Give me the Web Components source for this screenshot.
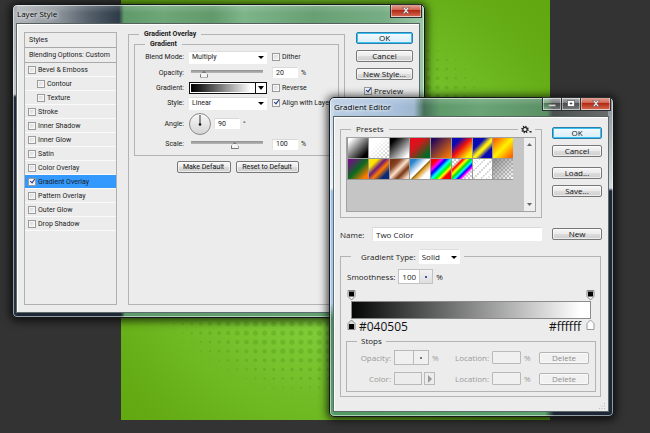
<!DOCTYPE html>
<html lang="en">
<head>
<meta charset="utf-8">
<title>Layer Style</title>
<style>
html, body { margin: 0; height: 100%; background: #333; }
body { font-family: Roboto, "Liberation Sans", sans-serif; color: #1b1b1b; overflow: hidden; }
</style>
</head>
<body>
<work-space></work-space>
<script>
const controls = `
*, *::before { box-sizing: border-box; }
label, span { white-space: nowrap; }
input, select, button { font: inherit; color: inherit; margin: 0; min-width: 0; border-radius: 0; }
input[type=text] { width: 100%; height: var(--h, 11px); padding: 0 3px; border: 1px solid #fff; border-top-color: #d8d8d8; border-left-color: #e2e2e2; background: #fff; outline: none; display: block; }
.pick { position: relative; display: block; }
.pick select { appearance: none; display: block; width: 100%; height: var(--sh, 13px); padding: 0 2px; border: 1px solid #fff; border-top-color: #ddd; background: #fff; }
.pick::after { content: ""; position: absolute; right: 3px; top: 50%; margin-top: -1px; border: 3px solid transparent; border-top-color: #000; border-bottom: 0; pointer-events: none; }
`;
function define(name, html) {
  const t = document.createElement('template');
  t.innerHTML = html;
  customElements.define(name, class extends HTMLElement {
    constructor() {
      super();
      this.attachShadow({ mode: 'open' }).append(t.content.cloneNode(true));
    }
  });
}

/* glass window: title bar, window buttons, slotted client area */
define('glass-window', `<style>
*{box-sizing:border-box}
:host{display:block;box-sizing:border-box;border:1px solid #15191c;border-radius:5px;background:var(--glass);
 box-shadow:inset 0 0 0 1px #ffffff88,0 1px 8px 2px #000b}
header{display:flex;align-items:flex-start;justify-content:space-between;height:18px;padding:0 3px}
h1{margin:0;padding-left:1px;font:400 8px/18px "Open Sans",sans-serif;color:#000;text-shadow:0 0 4px #fff,0 0 5px #fffc,0 0 6px #fffa}
main{margin:0 4px 4px 3px;background:#ececec;border:1px solid #5e6a6c;border-top-color:#56605f;box-shadow:inset 1px 1px #fff}
</style><header><h1><slot name="title"></slot></h1><slot name="buttons"></slot></header><main><slot></slot></main>`);

define('window-button', `<style>
:host{display:block}
button{display:flex;align-items:center;justify-content:center;box-sizing:border-box;width:var(--w,18px);height:12px;padding:0;border:1px solid #ffffff70;border-top:0;
 background:var(--face,linear-gradient(#ffffff66,#ffffff30 50%,#00000030 50%,#ffffff30));box-shadow:0 0 0 1px #2a3034}
:host([kind=close]){--face:linear-gradient(#e0a396,#cf5f4b 48%,#b32a15 50%,#d2644c)}
svg{display:none}
:host([kind=close]) .c,:host([kind=max]) .m,:host([kind=min]) .n{display:block}
</style><button type="button" aria-label="Window control">
<svg class="c" width="8" height="7" viewBox="0 0 8 7"><path d="M.6.6h2L4 2.200 5.400.6h2L5 3.500l2.400 2.900h-2L4 4.800 2.600 6.400h-2L3 3.500z" fill="#fff" stroke="#3c3f4c" stroke-width=".5"/></svg>
<svg class="m" width="8" height="7" viewBox="0 0 8 7"><path d="M.5.5h7v6h-7zM3 3h2v1H3z" fill="#fff" fill-rule="evenodd" stroke="#444" stroke-width=".6"/></svg>
<svg class="n" width="8" height="7" viewBox="0 0 8 7"><path d="M.5 4.500h7v1.800h-7z" fill="#ddd" stroke="#777" stroke-width=".5"/></svg>
</button>`);

define('push-button', `<style>
:host{display:block}
button{font:inherit;color:#111;display:block;box-sizing:border-box;width:100%;height:12px;line-height:10px;padding:0 5px;white-space:nowrap;border:1px solid #777;border-radius:2px;
 background:linear-gradient(#f7f7f7,#ebebeb 48%,#dcdcdc 52%,#cfcfcf);box-shadow:inset 0 0 0 1px #fff9}
:host([primary]) button{border-color:#2c7fa8;background:linear-gradient(#f3fafd,#d9eef8);box-shadow:inset 0 0 0 1px #3cc0f0}
:host([off]) button{color:#8d8d8d;border-color:#b4b4b4;background:#f1f1f1}
</style><button type="button"><slot></slot></button>`);

customElements.define('check-item', class extends HTMLElement {
  constructor() {
    super();
    this.attachShadow({ mode: 'open' }).innerHTML = `<style>
:host{display:block}
label{display:flex;align-items:center;gap:2px;white-space:nowrap}
input{appearance:none;flex:none;box-sizing:border-box;width:8px;height:8px;margin:0;border:1px solid #9a9a9a;background:linear-gradient(135deg,#cfd2d4,#fafafa);position:relative;outline:1px solid #f6f6f6;outline-offset:-2px}
input:checked{background:#f2f5fa}
input:checked::after{content:"";position:absolute;left:2px;top:-1px;width:2px;height:4px;border:solid #1f3c8c;border-width:0 1px 1px 0;transform:rotate(38deg)}
</style><label><input type="checkbox"><slot></slot></label>`;
  }
  connectedCallback() { this.shadowRoot.querySelector('input').checked = this.hasAttribute('checked'); }
});

define('group-box', `<style>
:host{display:block}
fieldset{box-sizing:border-box;min-width:0;margin:0;padding:0;border:1px solid #b3b3b3;height:100%}
legend{margin-left:var(--inset,10px);padding:0 var(--lp,5px);line-height:10px;font-weight:var(--lw,400)}
</style><fieldset><legend><slot name="legend"></slot></legend><slot></slot></fieldset>`);

define('effect-list', `<style>
:host{display:block;box-sizing:border-box;min-height:273px;border:1px solid #b0b0b0}
ul{list-style:none;margin:0;padding:0}
li{box-sizing:border-box;height:14px;padding-left:3px;border-bottom:1px solid #fafafa;display:flex;align-items:center}
li.head{height:15px;border-bottom:1px solid #a9a9a9;padding-left:4px}
li.sub{padding-left:12px}
li.on{background:#3399ff}
</style><ul>
<li class="head">Styles</li><li class="head">Blending Options: Custom</li>
<li><check-item>Bevel &amp; Emboss</check-item></li>
<li class="sub"><check-item>Contour</check-item></li>
<li class="sub"><check-item>Texture</check-item></li>
<li><check-item>Stroke</check-item></li>
<li><check-item>Inner Shadow</check-item></li>
<li><check-item>Inner Glow</check-item></li>
<li><check-item>Satin</check-item></li>
<li><check-item>Color Overlay</check-item></li>
<li class="on"><check-item checked>Gradient Overlay</check-item></li>
<li><check-item>Pattern Overlay</check-item></li>
<li><check-item>Outer Glow</check-item></li>
<li><check-item>Drop Shadow</check-item></li>
</ul>`);

define('overlay-settings', `<style>${controls}
:host{display:block}
.grid{display:grid;grid-template-columns:49px 78px 1fr;grid-template-rows:16px 15px 15px 16px 25px 16px;column-gap:5px;align-items:center;padding-bottom:3px}
.grid>label{text-align:right}
.val{display:grid;grid-template-columns:26px auto;gap:3px;justify-content:start;align-items:center}
input[type=range]{appearance:none;width:72px;height:10px;margin:0 0 0 2px;background:linear-gradient(#8f8f8f,#b9b9b9) 0 2px/100% 3px no-repeat;display:block}
input[type=range]::-webkit-slider-thumb{appearance:none;width:8px;height:7px;margin-top:3px;clip-path:polygon(50% 0,100% 60%,100% 100%,0 100%,0 60%);
 background:linear-gradient(#f4f4f4,#f4f4f4) 50% 70%/6px 4px no-repeat #777}
.ramp{display:flex;height:12px;padding:0;border:1px solid #111;background:#fff;width:100%}
.ramp i{flex:1;margin:1px;background:linear-gradient(90deg,#000,#222 15%,#fff 95%)}
.ramp b{width:11px;border-left:1px solid #111;display:flex;align-items:center;justify-content:center}
.ramp b::after{content:"";border:3px solid transparent;border-top:4px solid #000;border-bottom:0}
.ang{display:grid;grid-template-columns:22px 26px auto;gap:3px;align-items:center;justify-content:start}
svg{display:block}
.btns{display:flex;justify-content:center;gap:5px;padding:5px 0 0 2px}
.btns>:first-child{width:54px}.btns>:last-child{width:63px}
.inner{margin:0 5px}
</style>
<group-box class="inner"><span slot="legend">Gradient</span>
<div class="grid">
<label for="mode">Blend Mode:</label><span class="pick"><select id="mode"><option>Multiply</option></select></span><check-item>Dither</check-item>
<label for="opr">Opacity:</label><input type="range" id="opr" value="14"><div class="val"><input type="text" value="20" aria-label="Opacity"><span>%</span></div>
<label for="ramp">Gradient:</label><button class="ramp" id="ramp" type="button" aria-label="Gradient"><i></i><b></b></button><check-item>Reverse</check-item>
<label for="sty">Style:</label><span class="pick"><select id="sty"><option>Linear</option></select></span><check-item checked>Align with Layer</check-item>
<label for="ang">Angle:</label><div class="ang"><svg width="22" height="22" viewBox="0 0 22 22"><defs><linearGradient id="d" x2="0" y2="1"><stop stop-color="#f8f8f8"/><stop offset="1" stop-color="#d4d4d4"/></linearGradient></defs><circle cx="11" cy="11" r="10.500" fill="url(#d)" stroke="#8a8a8a"/><path d="M11 2v9" stroke="#333"/><circle cx="11" cy="11.500" r="1.300" fill="#111"/></svg><input type="text" id="ang" value="90"><span>°</span></div><span></span>
<label for="scr">Scale:</label><input type="range" id="scr" value="62"><div class="val"><input type="text" value="100" aria-label="Scale"><span>%</span></div>
</div></group-box>
<div class="btns"><push-button>Make Default</push-button><push-button>Reset to Default</push-button></div>`);

define('layer-style', `<style>
:host{display:grid;grid-template-columns:93px 1fr 57px;column-gap:11px;padding:5px 6px 7px 7px;font-size:7px}
effect-list{margin-top:3px}
.panel{--lw:700}
.side{display:flex;flex-direction:column;gap:6px;padding-top:3px;font:8px "Open Sans",sans-serif}
.side check-item{margin:-1px 0 0 8px}
</style><effect-list></effect-list>
<group-box class="panel"><span slot="legend">Gradient Overlay</span><overlay-settings></overlay-settings></group-box>
<div class="side"><push-button primary>OK</push-button><push-button>Cancel</push-button><push-button>New Style...</push-button><check-item checked>Preview</check-item></div>`);

/* gradient presets */
const checker = (c) => `repeating-conic-gradient(${c} 0 25%,#fff 0 50%) 0 0/4px 4px`;
const presets = [
  '#fff 10%,#000 85%', null, '#000 15%,#fff 90%', '#e30e1c 20%,#cc1a1c 38%,#006b22 85%', '#24085c 10%,#ff7a00 95%',
  '#0a0ab4 22%,#f01010 48%,#fff200 85%', '#0a0ab4 30%,#ffee10 50%,#ffee10 56%,#0a0ab4 74%', '#ff6a00 10%,#fff200 50%,#ff6a00 90%',
  '#6f1180 10%,#0a6a20 50%,#ff7c00 88%', '#ffe600 22%,#6d1a7c 42%,#ff7a00 58%,#0b2a78 80%', '#7a3514 15%,#8c4a2a 28%,#ffe2cc 48%,#7a3514 68%,#f6d9c4 90%',
  '#2a84cc 15%,#fff 46%,#fff 50%,#8f6512 54%,#e0a030 60%,#fff 78%', '#f00 16%,#f0f 28%,#00f 38%,#0ff 50%,#0f0 62%,#ff0 70%,#f00 80%',
  null, null, null].map(s => s && `linear-gradient(135deg,${s})`);
presets[1] = `linear-gradient(135deg,#fff 30%,#fff0),${checker('#ccc')}`;
presets[13] = `linear-gradient(135deg,#fff0 20%,#f00 28%,#ff0 38%,#0d0 48%,#0ff 56%,#00f 64%,#f0f 70%,#fff0 78%),${checker('#ccc')}`;
presets[14] = `repeating-linear-gradient(135deg,#fff 0 3px,#fff6 3px 5px),${checker('#bbb')}`;
presets[15] = `linear-gradient(135deg,#777c,#7770),${checker('#c4c4c4')}`;

customElements.define('preset-grid', class extends HTMLElement {
  constructor() {
    super();
    this.attachShadow({ mode: 'open' }).innerHTML = `<style>
:host{display:flex;box-sizing:border-box;height:75px;border:1px solid #a2a2a2;background:#c5c5c5;justify-content:space-between}
.g{display:grid;grid-template-columns:repeat(8,1fr);grid-auto-rows:20px;gap:1px;width:165px;align-self:flex-start;background:#999;padding:0 0 1px 1px}
.g button{border:0;padding:0;min-width:0;border-radius:0}
.bar{width:11px;background:#efefef;display:flex;flex-direction:column;justify-content:space-between;align-items:center;padding:5px 0;box-sizing:border-box}
.bar svg{display:block}
</style><div class="g">${presets.map((b, i) => `<button type="button" aria-label="Preset ${i + 1}" style="background:${b}"></button>`).join('')}</div>
<div class="bar"><svg width="5" height="3"><path d="M0 3 2.500 0 5 3z" fill="#666"/></svg><svg width="5" height="3"><path d="M0 0 2.500 3 5 0z" fill="#666"/></svg></div>`;
  }
});

define('gradient-ramp', `<style>
:host{display:block}
.row{display:flex;justify-content:space-between;align-items:center}
.bar{height:18px;margin:0 4px;box-sizing:border-box;border:1px solid #8b8b8b;background:linear-gradient(90deg,#040505,#fff 96%)}
svg{display:block}
.row.low{height:14px;align-items:flex-start}
.codes{flex:1;display:flex;justify-content:space-between;padding:0 5px 0 3px;font:12px/16px "Open Sans",sans-serif;color:#111}
</style>
<div class="row"><svg width="9" height="11" viewBox="0 0 9 11"><path d="M1 .5h7v6L4.500 10 1 6.500z" fill="#eee" stroke="#888"/><path d="M2 1.500h5v5H2z" fill="#000"/></svg><svg width="9" height="11" viewBox="0 0 9 11"><path d="M1 .5h7v6L4.500 10 1 6.500z" fill="#eee" stroke="#888"/><path d="M2 1.500h5v5H2z" fill="#000"/></svg></div>
<div class="bar"></div>
<div class="row low"><svg width="9" height="12" viewBox="0 0 9 12"><path d="M1 10.500h7v-6L4.500 1 1 4.500z" fill="#ddd" stroke="#888"/><path d="M2 5h5v5H2z" fill="#000"/></svg>
<div class="codes"><span>#040505</span><span>#ffffff</span></div>
<svg width="9" height="12" viewBox="0 0 9 12"><path d="M1 10.500h7v-6L4.500 1 1 4.500z" fill="#fff" stroke="#999"/></svg></div>`);

define('stop-rows', `<style>${controls}
:host{display:grid;grid-template-columns:44px 35px 15px 39px 29px 1fr 50px;column-gap:3px;row-gap:7px;align-items:center;padding:4px 6px 6px 0;color:#9a9a9a}
label{text-align:right}
.f{display:flex;height:15px;border:1px solid #b9b9b9;background:#f0f0f0}
.f input{flex:1;width:0;border:0;height:100%;background:none}
.f button{width:15px;border:0;border-left:1px solid #b9b9b9;background:none;padding:0;display:flex;align-items:center;justify-content:center}
.f button i{width:2px;height:2px;background:#777}
.c{display:flex;gap:2px;width:41px}
.c button{height:13px;border:1px solid #b9b9b9;background:#ececec;padding:0;display:flex;align-items:center;justify-content:center}
.c .s{flex:1}.c .a{width:11px}
.c .a::after{content:"";border:4px solid transparent;border-left:4px solid #999;border-right:0}
input.loc{height:13px;border:1px solid #b9b9b9;background:#f0f0f0;border-radius:1px}
</style>
<label for="o">Opacity:</label><div class="f"><input type="text" id="o" disabled><button type="button" aria-label="Opacity slider"><i></i></button></div><span>%</span>
<label for="l1">Location:</label><input class="loc" type="text" id="l1" disabled><span>%</span><push-button off>Delete</push-button>
<label for="c">Color:</label><div class="c"><button class="s" id="c" type="button" aria-label="Color"></button><button class="a" type="button" aria-label="Color menu"></button></div><span></span>
<label for="l2">Location:</label><input class="loc" type="text" id="l2" disabled><span>%</span><push-button off>Delete</push-button>`);

define('gradient-editor', `<style>${controls}
:host{display:block;font:8px "Open Sans",sans-serif;padding:7px 6px 14px 6px;position:relative}
.top{display:grid;grid-template-columns:1fr 50px;column-gap:10px}
.presets{position:relative;height:94px}
.presets preset-grid{margin:3px 5px 0}
.presets group-box{height:100%}
.gear{position:absolute;right:7px;top:0;width:17px;height:10px;border:0;padding:0;background:#ececec;display:flex;align-items:center;justify-content:center}
.side{display:flex;flex-direction:column;gap:6px;padding-top:3px}
.side :nth-child(3){margin-top:4px}
.name{display:flex;align-items:center;gap:9px;--h:14px}
.name label{width:23px}
.mid{margin-top:9px;align-items:center}
.type{margin:8px 1px 0 0;--lp:4px}
.tl{display:flex;align-items:center;gap:3px;padding-left:6px;--sh:15px}
.tl .pick{width:41px}
.smooth{display:flex;align-items:center;gap:3px;padding:5px 0 0 6px}
.spin{display:flex;width:35px;height:15px;border:1px solid #c2c2c2;background:#fff}
.spin input{width:20px;height:13px;border:0;padding:0 0 0 3px}
.spin button{flex:1;border:0;border-left:1px solid #ccc;background:linear-gradient(#f2f2f2,#dedede);padding:0;display:flex;align-items:center;justify-content:center}
.spin i{width:2px;height:2px;background:#3558a8}
gradient-ramp{margin:6px 5px 0 6px}
.stops{margin:3px 4px 4px 5px}
.grip{position:absolute;right:2px;bottom:1px}
</style>
<div class="top"><div class="presets"><group-box><span slot="legend">Presets</span><preset-grid></preset-grid></group-box>
<button class="gear" type="button" aria-label="Preset menu"><svg width="12" height="9" viewBox="0 0 12 9"><circle cx="4" cy="4.500" r="3" fill="none" stroke="#222" stroke-width="1.600" stroke-dasharray="1.200 1.150"/><circle cx="4" cy="4.500" r="2.200" fill="none" stroke="#222" stroke-width="1.200"/><path d="M8.500 6h2v1.500h-2z" fill="#222"/></svg></button></div>
<div class="side"><push-button primary>OK</push-button><push-button>Cancel</push-button><push-button>Load...</push-button><push-button>Save...</push-button></div></div>
<div class="top mid"><div class="name"><label for="n">Name:</label><input type="text" id="n" value="Two Color"></div><push-button>New</push-button></div>
<group-box class="type"><div slot="legend" class="tl"><label for="t">Gradient Type:</label><span class="pick"><select id="t"><option>Solid</option></select></span></div>
<div class="smooth"><label for="s">Smoothness:</label><div class="spin"><input type="text" id="s" value="100"><button type="button" aria-label="Smoothness slider"><i></i></button></div><span>%</span></div>
<gradient-ramp></gradient-ramp>
<group-box class="stops"><span slot="legend">Stops</span><stop-rows></stop-rows></group-box></group-box>
<svg class="grip" width="7" height="7" viewBox="0 0 7 7" fill="#bbb"><path d="M5 0h1v1H5zM5 2.500h1v1H5zM5 5h1v1H5zM2.500 2.500h1v1h-1zM2.500 5h1v1h-1zM0 5h1v1H0z"/></svg>`);

/* artboard with a ring of halftone dots */
customElements.define('art-board', class extends HTMLElement {
  constructor() {
    super();
    let dots = '';
    for (let i = -18; i < 24; i++) for (let j = -36; j < 9; j++) {
      const x = 152.700 + i * 9.100, y = 333 + j * 9.100;
      const d = Math.hypot(x - 199, y - 200), r = Math.min(2.600, (208 - d) / 20);
      if (r > .4) dots += `<circle cx="${x.toFixed(1)}" cy="${y.toFixed(1)}" r="${r.toFixed(1)}"/>`;
    }
    this.attachShadow({ mode: 'open' }).innerHTML = `<style>
:host{display:block;background:radial-gradient(circle at 50% 52%,#8bd848 0,#84d13e 30%,#72bd27 58%,#63aa13 88%,#61a710)}
svg{display:block;width:100%;height:100%;fill:#3f8a0c;fill-opacity:.26}
</style><svg aria-hidden="true">${dots}</svg>`;
  }
});

define('work-space', `<style>
:host{display:block;position:relative;height:100vh;overflow:hidden;background:#333}
art-board{position:absolute;inset:0 100px 13px 121px}
.a{position:absolute;left:12px;right:225px;top:4px;
 --glass:linear-gradient(#a7acb2,#c5c9ce 89px,#1f2b39 92px,#27323f) 0 0/4px 100% no-repeat,
 linear-gradient(90deg,#1c2836 108px,#5d9a6b 112px,#63a472) 0 100%/100% 5px no-repeat,
 linear-gradient(#ffffff30,#fff0 8px,#fff0) 0 0/100% 18px no-repeat,
 linear-gradient(90deg,#b5b9bd,#8d949b 45px,#56616c 75px,#2f3b48 106px,#5f9a69 111px,#6ea678 150px,#629a6c 200px,#7db489 230px,#689f73 300px,#77ad84 370px,#9bc9a8)}
.b{position:absolute;left:329px;right:36px;top:97px;
 --glass:linear-gradient(#c3d5e8,#e8f1fa 90px,#9cc3ec 93px,#a9c8ea 205px,#4b8c5c 220px,#5ba26c) 0 0/4px 100% no-repeat,
 linear-gradient(#8a9096,#d5dade 90px,#1d2938 93px,#1d2938) 100% 0/5px 100% no-repeat,
 linear-gradient(90deg,#4f9a60,#5ba26c 215px,#1b2737 224px) 0 100%/100% 5px no-repeat,
 linear-gradient(#ffffff30,#fff0 8px,#fff0) 0 0/100% 18px no-repeat,
 linear-gradient(90deg,#b9cde4,#a8c0dc 65px,#9fb8cf 84px,#47705a 94px,#5f9a6a 110px,#6aa576 150px,#5b9065 217px,#4a4f50 223px,#6c6f70)}
.ctl{display:flex;gap:1px}
</style>
<art-board></art-board>
<glass-window class="a"><span slot="title">Layer Style</span><div slot="buttons" class="ctl"><window-button kind="close" style="--w:30px"></window-button></div><layer-style></layer-style></glass-window>
<glass-window class="b"><span slot="title">Gradient Editor</span><div slot="buttons" class="ctl"><window-button kind="min"></window-button><window-button kind="max"></window-button><window-button kind="close" style="--w:29px"></window-button></div><gradient-editor></gradient-editor></glass-window>`);
</script>
</body>
</html>
